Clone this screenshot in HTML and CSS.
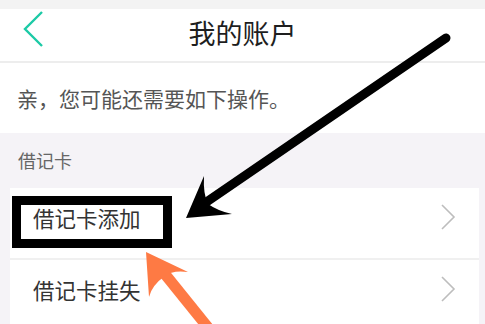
FILE: index.html
```html
<!DOCTYPE html>
<html lang="zh-CN">
<head>
    <meta charset="UTF-8">
    <meta name="viewport" content="width=device-width, initial-scale=1.0">
    <title>我的账户</title>
    <link rel="stylesheet" href="styles.css">
</head>
<body>
    <div class="page">
        <div class="status"></div>
        <div class="header">
            <svg class="back" width="22" height="38" viewBox="0 0 22 38">
                <polyline points="19,2 2,19 19,36" fill="none" stroke="#1ccaa6" stroke-width="2.4"/>
            </svg>
            <div class="title">我的账户</div>
        </div>
        <div class="tip">亲，您可能还需要如下操作。</div>
        <div class="section">
            <div class="section-label">借记卡</div>
            <div class="list">
                <div class="row">
                    <span>借记卡添加</span>
                    <svg class="arrow" width="16" height="26" viewBox="0 0 16 26">
                        <polyline points="2,1 14,13 2,25" fill="none" stroke="#bdbdbd" stroke-width="1.6"/>
                    </svg>
                </div>
                <div class="row">
                    <span>借记卡挂失</span>
                    <svg class="arrow" width="16" height="26" viewBox="0 0 16 26">
                        <polyline points="2,1 14,13 2,25" fill="none" stroke="#bdbdbd" stroke-width="1.6"/>
                    </svg>
                </div>
            </div>
        </div>

        <!-- annotation marks drawn over the screenshot -->
        <svg class="marks" width="485" height="324" viewBox="0 0 485 324">
            <rect x="16.5" y="200.5" width="151" height="43" fill="none" stroke="#000" stroke-width="9"/>
            <line x1="446" y1="38" x2="205" y2="203" stroke="#000" stroke-width="9" stroke-linecap="round"/>
            <path d="M186,218 L204,176 Q203,194 208,204 Q218,211 232,214 Z" fill="#000"/>
            <line x1="210" y1="330" x2="160" y2="268" stroke="#fe7a44" stroke-width="11"/>
            <path d="M146,252 L188,272 Q172,270 165,276 Q152,285 149,297 Z" fill="#fe7a44"/>
        </svg>
    </div>
</body>
</html>
```

FILE: styles.css
```css
* {
    margin: 0;
    padding: 0;
    box-sizing: border-box;
}

body {
    font-family: "Noto Sans CJK SC", "Noto Sans", sans-serif;
    background: #fff;
    width: 485px;
    height: 324px;
    overflow: hidden;
}

.page {
    position: relative;
    width: 485px;
    height: 324px;
}

.status {
    height: 9px;
    background: #f3f3f3;
}

.header {
    height: 54px;
    display: flex;
    align-items: center;
    justify-content: center;
    border-bottom: 2px solid #ededed;
    position: relative;
}

.back {
    position: absolute;
    left: 23px;
    top: 1px;
}

.title {
    font-size: 27px;
    color: #1e1e1e;
    margin-top: -6px;
}

.tip {
    height: 70px;
    display: flex;
    align-items: center;
    padding-left: 17px;
    font-size: 21px;
    color: #555;
}

.section {
    background: #f5f3f7;
    height: 191px;
}

.section-label {
    height: 55px;
    padding-left: 18px;
    padding-top: 14px;
    font-size: 18px;
    color: #666;
}

.list {
    margin-left: 10px;
    margin-right: 6px;
    background: #fff;
}

.row {
    height: 72px;
    display: flex;
    align-items: center;
    justify-content: space-between;
    padding-left: 23px;
    padding-right: 23px;
    font-size: 21.5px;
    color: #333;
    border-bottom: 2px solid #f0f0f0;
}

.row span {
    margin-top: -12px;
}

.row .arrow {
    margin-top: -12px;
}

.marks {
    position: absolute;
    left: 0;
    top: 0;
    pointer-events: none;
}
```
